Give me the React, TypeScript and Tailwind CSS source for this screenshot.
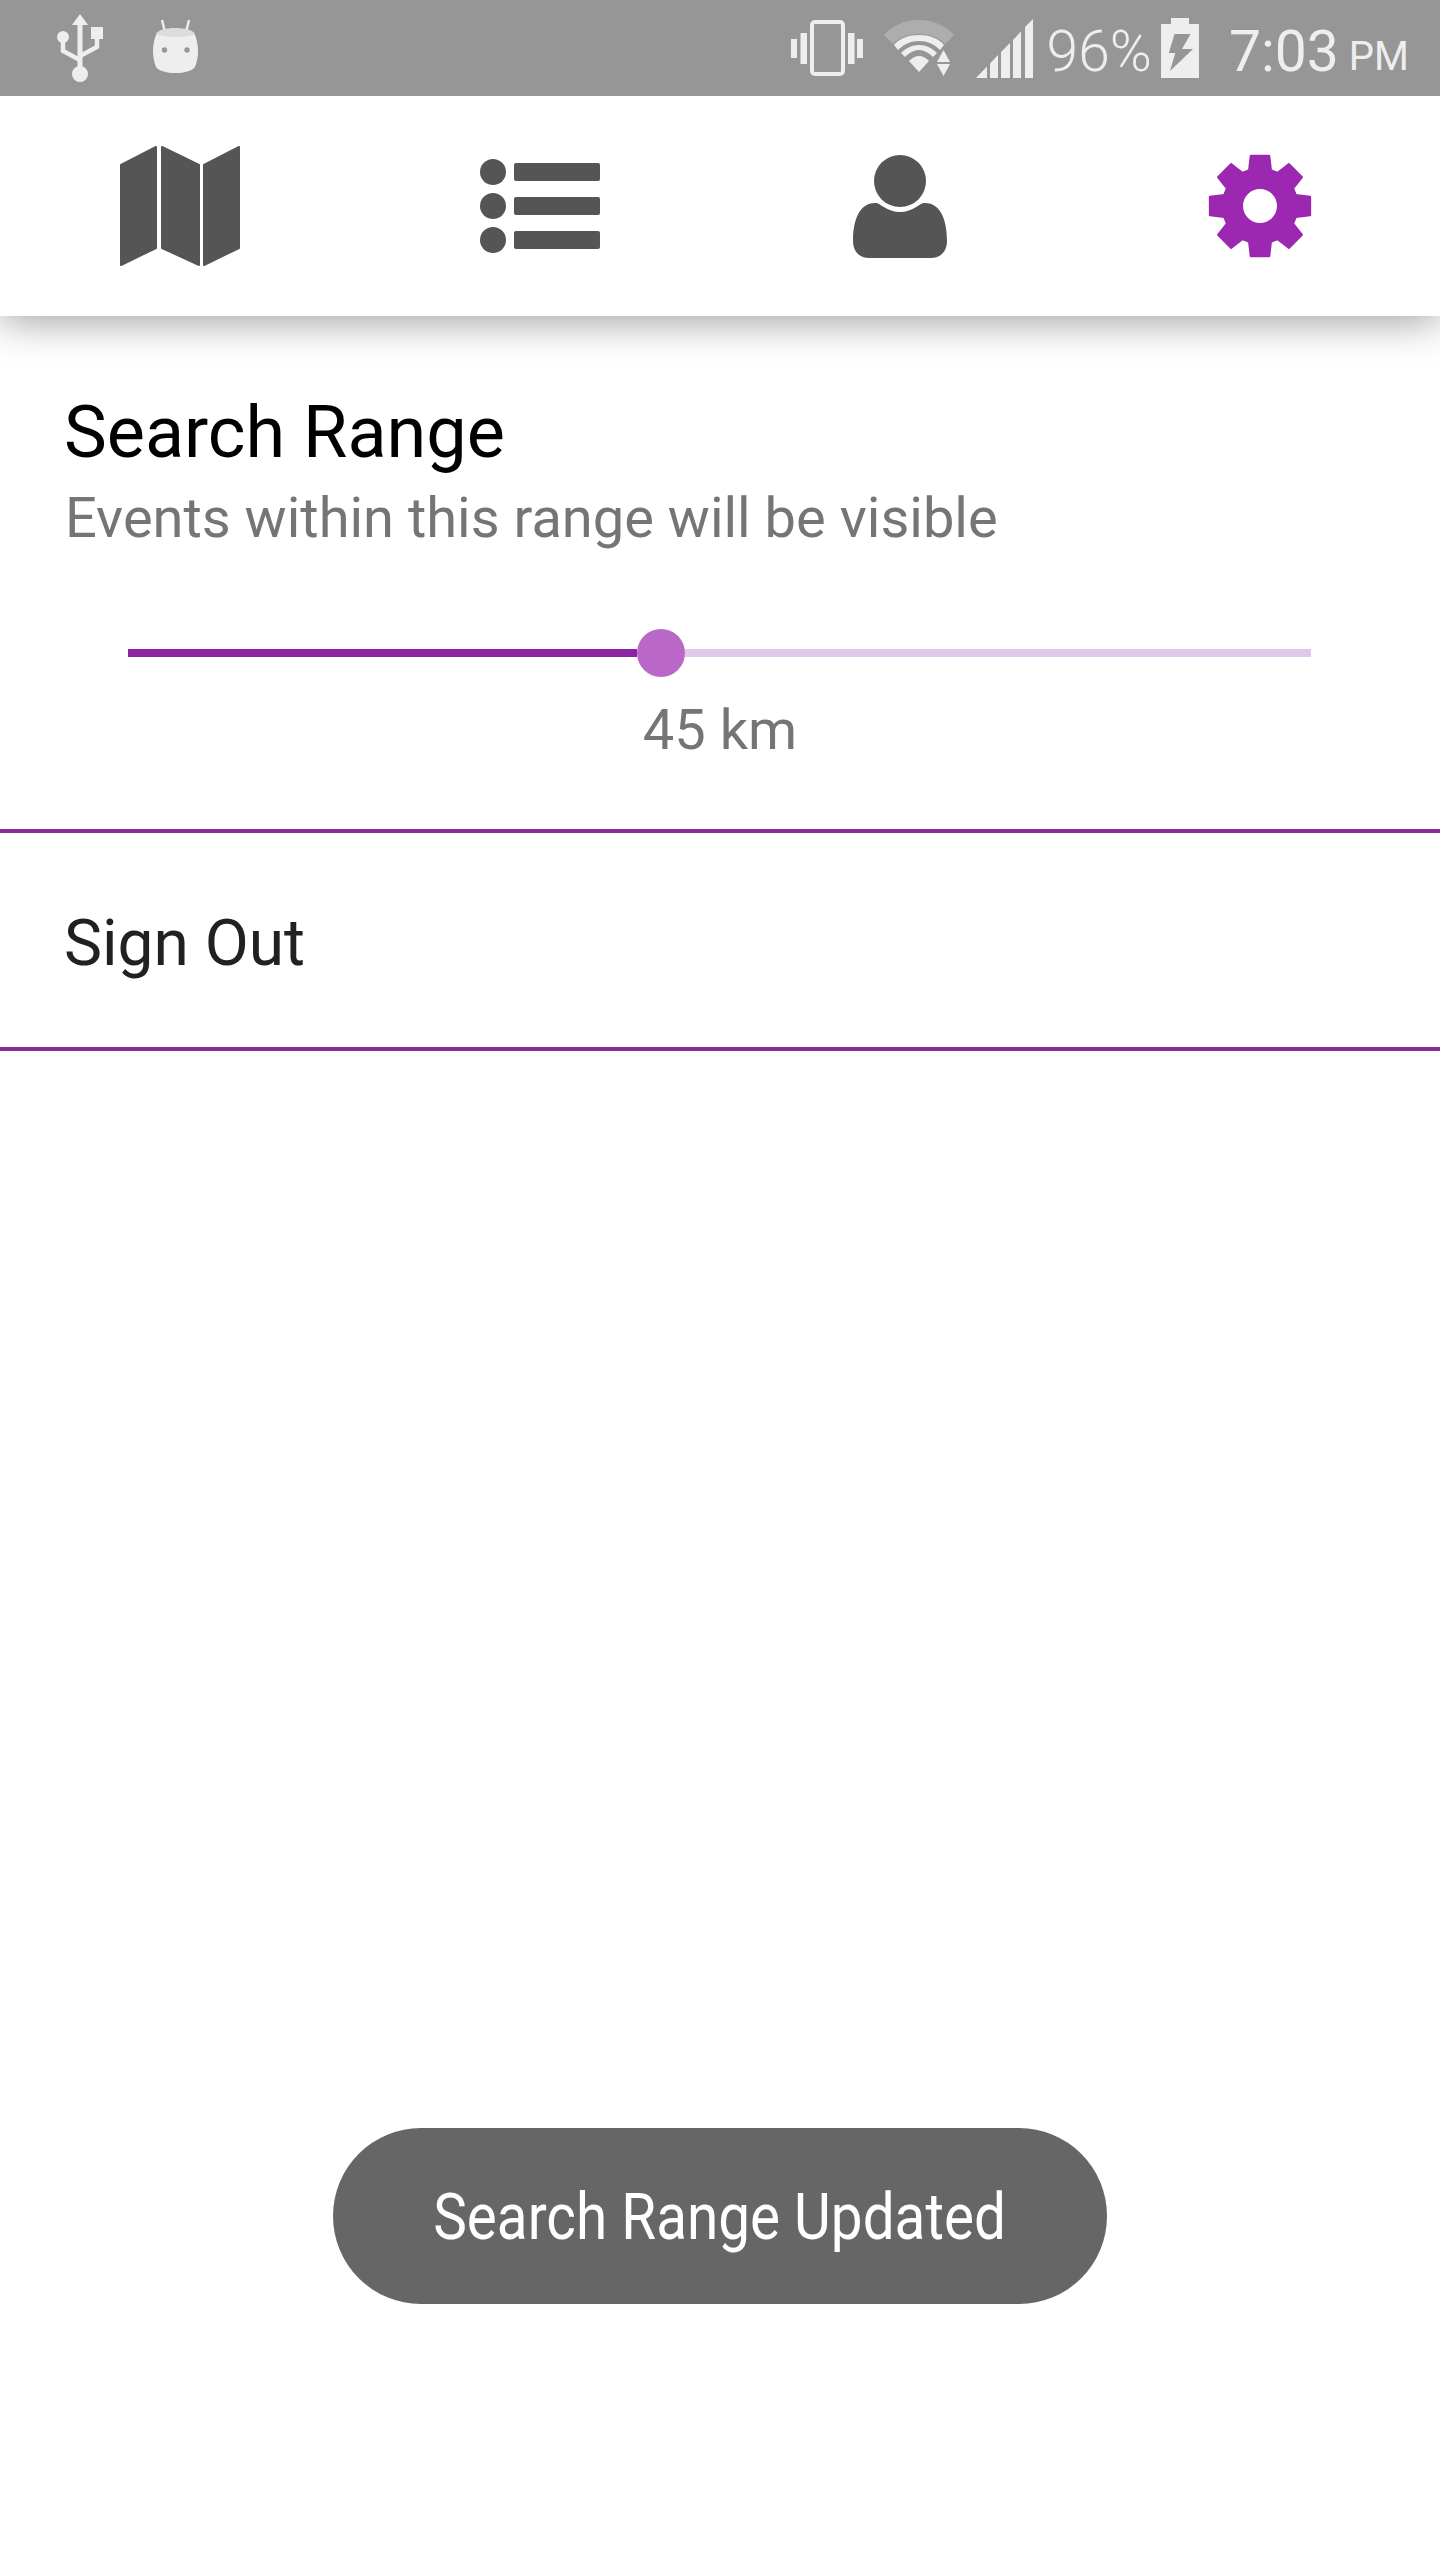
import React from "react";

const gearPath = () => {
  const pt = (r: number, deg: number) => {
    const a = ((deg - 90) * Math.PI) / 180;
    return `${(52 + r * Math.cos(a)).toFixed(2)} ${(52 + r * Math.sin(a)).toFixed(2)}`;
  };
  const cmds: string[] = [];
  for (let i = 0; i < 8; i++) {
    const c = i * 45;
    cmds.push(`${i === 0 ? "M" : "L"}${pt(37.5, c - 17)}`);
    cmds.push(`L${pt(51, c - 10.5)}`);
    cmds.push(`L${pt(51, c + 10.5)}`);
    cmds.push(`L${pt(37.5, c + 17)}`);
  }
  return cmds.join(" ") + " Z";
};

function StatusIcons() {
  return (
    <div className="ml-auto flex items-center pr-[31px]">
      {/* vibrate */}
      <svg width="72" height="56" viewBox="0 0 72 56" className="mr-[21px] shrink-0">
        <rect x="21" y="2" width="31" height="52" rx="3" fill="none" stroke="#eeeeee" strokeWidth="4" />
        <rect x="9.5" y="13" width="6.5" height="31" fill="#eeeeee" />
        <rect x="0" y="19" width="6" height="19" fill="#eeeeee" />
        <rect x="57" y="13" width="6.5" height="31" fill="#eeeeee" />
        <rect x="66" y="19" width="6" height="19" fill="#eeeeee" />
      </svg>
      {/* wifi */}
      <svg width="70" height="56" viewBox="0 0 70 56" className="mr-[22px] shrink-0">
        <path d="M0 15 C10 4 22 0 35 0 C48 0 60 4 70 15 L61 24 C54 17 45 14 35 14 C25 14 16 17 9 24 Z" fill="#adadad" />
        <path d="M10 25 C16 18 25 15 35 15 C45 15 54 18 60 25 L56 30 C50 24 43 21 35 21 C27 21 20 24 14 30 Z" fill="#eeeeee" />
        <path d="M17 33 C22 28 28 25 35 25 C42 25 48 28 53 33 L49 37 C45 33 40 30 35 30 C30 30 25 33 21 37 Z" fill="#eeeeee" />
        <path d="M25 41 C28 38 31 36 35 36 C39 36 42 38 45 41 L35 52 Z" fill="#eeeeee" />
        <path d="M59.5 30 L66 42 L53 42 Z M53 44 L66 44 L59.5 56 Z" fill="#eeeeee" />
      </svg>
      {/* signal */}
      <svg width="57" height="59" viewBox="0 0 57 59" className="mr-[14px] shrink-0" fill="#eeeeee">
        <polygon points="0,59 11,47.6 11,59" />
        <polygon points="14,44.5 22,36 22,59 14,59" />
        <polygon points="25,33 34,24 34,59 25,59" />
        <polygon points="37,21 45,12.4 45,59 37,59" />
        <polygon points="49,8 57,0 57,59 49,59" />
      </svg>
      <span className="text-[57px] leading-none text-[#eeeeee] mr-[9px] mt-[6px] font-light">96%</span>
      {/* battery */}
      <svg width="38" height="60" viewBox="0 0 38 60" className="mr-[30px] shrink-0">
        <path d="M10 0 H28 V6 H38 V60 H0 V6 H10 Z" fill="#eeeeee" />
        <polygon points="13.5,16 29.5,16 21,31 32,31 9,53 14.3,35 7.8,35" fill="#969696" />
      </svg>
      <span className="text-[57px] leading-none text-[#eeeeee] mr-[10px] mt-[6px]">7:03</span>
      <span className="text-[40px] leading-none text-[#eeeeee] mt-[18px]">PM</span>
    </div>
  );
}

function NavBar() {
  return (
    <nav className="relative z-10 h-[220px] bg-white shadow-[0_4px_40px_rgba(0,0,0,0.4)] flex items-center">
      <div className="w-[360px] flex justify-center">
        <svg width="120" height="120" viewBox="0 0 120 120" fill="#555555" stroke="#555555" strokeWidth="2" strokeLinejoin="round">
          <polygon points="1,19 36,1 36,102 1,119" />
          <polygon points="42,1 79,19 79,119 42,102" />
          <polygon points="84,19 119,1 119,102 84,119" />
        </svg>
      </div>
      <div className="w-[360px] flex justify-center">
        <svg width="120" height="94" viewBox="0 0 120 94" fill="#555555">
          <ellipse cx="13" cy="13" rx="13" ry="13" />
          <ellipse cx="13" cy="47" rx="13" ry="13" />
          <ellipse cx="13" cy="81" rx="13" ry="13" />
          <rect x="34" y="4" width="86" height="18" rx="2" />
          <rect x="34" y="38" width="86" height="18" rx="2" />
          <rect x="34" y="72" width="86" height="18" rx="2" />
        </svg>
      </div>
      <div className="w-[360px] flex justify-center">
        <svg width="94" height="103" viewBox="0 0 94 103" fill="#555555">
          <circle cx="47" cy="26" r="26" />
          <path d="M22 48 C26 48 27 50 30 51.5 C35 55 41 57 47 57 C53 57 59 55 64 51.5 C67 50 68 48 72 48 C88 48 94 66 94 86 C94 97 87 103 78 103 H16 C7 103 0 97 0 86 C0 66 6 48 22 48 Z" />
        </svg>
      </div>
      <div className="w-[360px] flex justify-center">
        <svg width="104" height="104" viewBox="0 0 104 104">
          <path d={gearPath()} fill="#9c27b0" stroke="#9c27b0" strokeWidth="2" strokeLinejoin="round" />
          <circle cx="52" cy="52" r="17" fill="#ffffff" />
        </svg>
      </div>
    </nav>
  );
}

export default function App() {
  return (
    <div className="w-[1440px] h-[2560px] bg-white flex flex-col font-['Roboto',sans-serif] overflow-hidden">
      {/* status bar */}
      <div className="relative z-20 h-[96px] bg-[#969696] flex items-center pl-[57px] shrink-0">
        <svg width="46" height="68" viewBox="0 0 46 68" className="mr-[50px] shrink-0">
          <polygon points="23,0 31,11 15,11" fill="#eeeeee" />
          <rect x="20.5" y="10" width="5" height="45" fill="#eeeeee" />
          <circle cx="23" cy="60" r="8" fill="#eeeeee" />
          <circle cx="6" cy="23" r="6" fill="#eeeeee" />
          <rect x="34" y="13" width="12" height="12" fill="#eeeeee" />
          <path d="M6 25 V37 L23 46 M40 24 V33 L23 42" fill="none" stroke="#eeeeee" strokeWidth="4.5" />
        </svg>
        <svg width="45" height="54" viewBox="0 0 45 54" className="shrink-0 mb-[4px]">
          <path d="M9 1 L12 13 M36 1 L33 13" stroke="#eeeeee" strokeWidth="2.4" fill="none" />
          <path d="M3 16 C3 10 42 10 42 16 C46 26 46 38 42 48 C36 56 9 56 3 48 C-1 38 -1 26 3 16 Z" fill="#eeeeee" />
          <path d="M3 15 C6 7 39 7 42 15 C36 19 9 19 3 15 Z" fill="#dcdcdc" />
          <circle cx="11.5" cy="31" r="2.7" fill="#969696" />
          <circle cx="34" cy="31" r="2.7" fill="#969696" />
        </svg>
        <StatusIcons />
      </div>

      <NavBar />

      {/* search range */}
      <section className="h-[517px] shrink-0 border-b-4 border-[#8e2a9e] pt-[75px]">
        <h2 className="pl-[64px] text-[72px] leading-[84px] text-black font-normal">Search Range</h2>
        <p className="mt-[11px] pl-[65px] text-[56px] leading-[64px] text-[#757575]">Events within this range will be visible</p>
        <div className="mt-[79px] ml-[128px] w-[1183px] h-[48px] flex items-center">
          <div className="w-[509px] h-[8px] bg-[#8a24a0]" />
          <div className="w-[48px] h-[48px] rounded-full bg-[#b968c7] shrink-0" />
          <div className="flex-1 h-[8px] bg-[#e1c8e8]" />
        </div>
        <div className="mt-[21px] text-center text-[56px] leading-[64px] text-[#757575]">45 km</div>
      </section>

      {/* sign out */}
      <section className="h-[218px] shrink-0 border-b-4 border-[#8e2a9e] flex items-center pl-[64px]">
        <span className="text-[64px] leading-none text-[#212121] mt-[8px]">Sign Out</span>
      </section>

      {/* toast */}
      <div className="mt-[1077px] flex justify-center">
        <div className="w-[774px] h-[176px] rounded-[88px] bg-[#666666] flex items-center justify-center pt-[4px]">
          <span className="text-[64px] leading-none text-white whitespace-nowrap scale-x-[0.885]">Search Range Updated</span>
        </div>
      </div>
    </div>
  );
}
